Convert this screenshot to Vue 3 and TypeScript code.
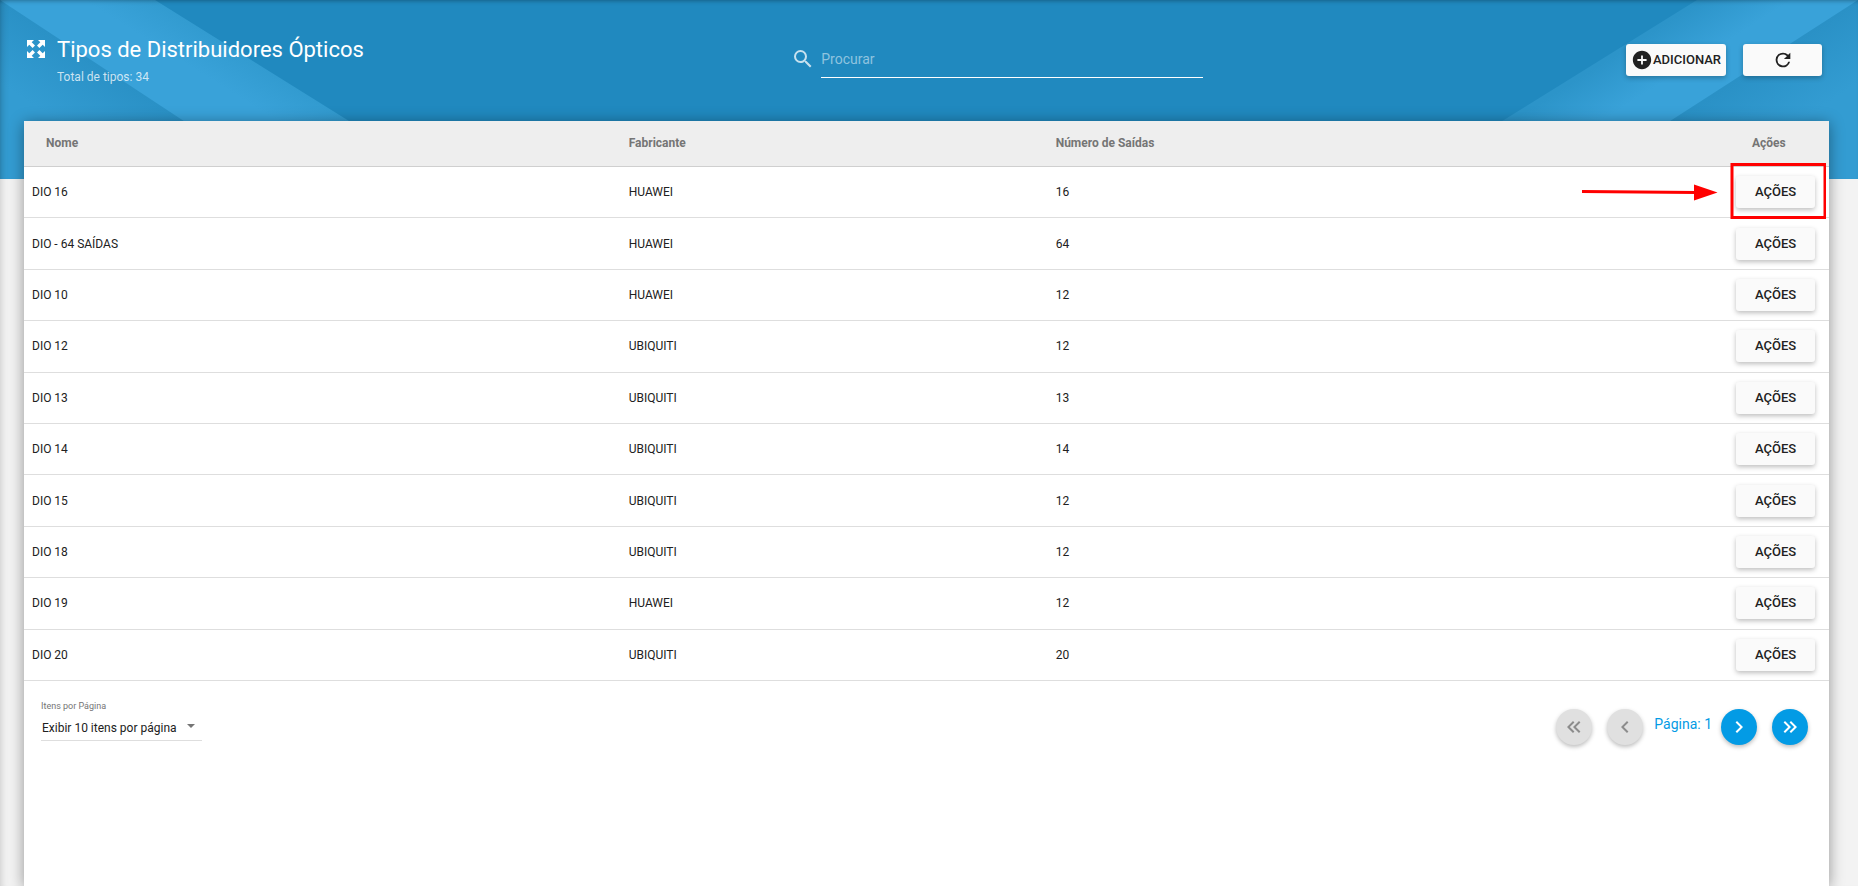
<script setup lang="ts">
import { ref } from 'vue'

interface DistributorType {
  name: string
  vendor: string
  outputs: number
}

const rows: DistributorType[] = [
  { name: 'DIO 16', vendor: 'HUAWEI', outputs: 16 },
  { name: 'DIO - 64 SAÍDAS', vendor: 'HUAWEI', outputs: 64 },
  { name: 'DIO 10', vendor: 'HUAWEI', outputs: 12 },
  { name: 'DIO 12', vendor: 'UBIQUITI', outputs: 12 },
  { name: 'DIO 13', vendor: 'UBIQUITI', outputs: 13 },
  { name: 'DIO 14', vendor: 'UBIQUITI', outputs: 14 },
  { name: 'DIO 15', vendor: 'UBIQUITI', outputs: 12 },
  { name: 'DIO 18', vendor: 'UBIQUITI', outputs: 12 },
  { name: 'DIO 19', vendor: 'HUAWEI', outputs: 12 },
  { name: 'DIO 20', vendor: 'UBIQUITI', outputs: 20 },
]

const search = ref('')
const pageSize = ref('10')
const page = ref(1)
</script>

<template>
  <div class="page">
    <div class="banner" aria-hidden="true">
      <svg class="facet facet-left" width="480" height="179" viewBox="0 0 480 179">
        <defs>
          <linearGradient id="outerL" gradientUnits="userSpaceOnUse" x1="100" y1="66" x2="62" y2="124">
            <stop offset="0" stop-color="#2a91c6" />
            <stop offset="1" stop-color="#339cd2" />
          </linearGradient>
          <linearGradient id="bandL" gradientUnits="userSpaceOnUse" x1="251" y1="60" x2="231" y2="92">
            <stop offset="0" stop-color="#329bd0" />
            <stop offset="1" stop-color="#39a2d9" />
          </linearGradient>
        </defs>
        <path d="M0 0H155L442 179H0Z" fill="url(#bandL)" />
        <path d="M0 0L272 179H0Z" fill="url(#outerL)" />
      </svg>
      <svg class="facet facet-right" width="480" height="179" viewBox="0 0 480 179">
        <defs>
          <linearGradient id="outerR" gradientUnits="userSpaceOnUse" x1="380" y1="66" x2="418" y2="124">
            <stop offset="0" stop-color="#2a91c6" />
            <stop offset="1" stop-color="#339cd2" />
          </linearGradient>
          <linearGradient id="bandR" gradientUnits="userSpaceOnUse" x1="229" y1="60" x2="255" y2="101">
            <stop offset="0" stop-color="#2c94c9" />
            <stop offset="1" stop-color="#39a2d9" />
          </linearGradient>
        </defs>
        <path d="M480 0H319L31 179H480Z" fill="url(#bandR)" />
        <path d="M480 0L202 179H480Z" fill="url(#outerR)" />
      </svg>
    </div>

    <header class="toolbar">
      <div class="heading">
        <svg class="expand" width="24" height="24" viewBox="0 0 24 24" fill="#fff">
          <path d="M3 3H10L7.700 5.300L11 8.600L8.600 11L5.300 7.700L3 10ZM21 3V10L18.700 7.700L15.400 11L13 8.600L16.300 5.300L14 3ZM3 21V14L5.300 16.300L8.600 13L11 15.400L7.700 18.700L10 21ZM21 21H14L16.300 18.700L13 15.400L15.400 13L18.700 16.300L21 14Z" />
        </svg>
        <div>
          <h1>Tipos de Distribuidores Ópticos</h1>
          <p>Total de tipos: 34</p>
        </div>
      </div>
      <div class="search">
        <svg width="24" height="24" viewBox="0 0 24 24" fill="#fff" fill-opacity=".75">
          <path d="M15.5 14h-.79l-.28-.27A6.47 6.47 0 0 0 16 9.5 6.5 6.5 0 1 0 9.5 16c1.61 0 3.09-.59 4.23-1.57l.27.28v.79l5 4.99L20.49 19l-4.99-5zm-6 0C7.01 14 5 11.99 5 9.5S7.01 5 9.5 5 14 7.01 14 9.5 11.99 14 9.5 14z" />
        </svg>
        <input v-model="search" type="text" placeholder="Procurar" aria-label="Procurar" />
      </div>
      <div class="tools">
        <button type="button" class="raised add">
          <svg width="22" height="22" viewBox="0 0 24 24" fill="#212121">
            <path d="M12 2C6.48 2 2 6.48 2 12s4.48 10 10 10 10-4.48 10-10S17.52 2 12 2zm5 11h-4v4h-2v-4H7v-2h4V7h2v4h4v2z" />
          </svg>
          <span>ADICIONAR</span>
        </button>
        <button type="button" class="raised" aria-label="Atualizar">
          <svg width="22" height="22" viewBox="0 0 24 24" fill="#212121">
            <path d="M17.65 6.35A7.96 7.96 0 0 0 12 4a8 8 0 1 0 7.73 10h-2.08A6 6 0 1 1 12 6c1.66 0 3.14.69 4.22 1.78L13 11h7V4l-2.35 2.35z" />
          </svg>
        </button>
      </div>
    </header>

    <main class="card">
      <table>
        <colgroup>
          <col class="c-name" />
          <col class="c-vendor" />
          <col />
          <col class="c-actions" />
        </colgroup>
        <thead>
          <tr>
            <th scope="col" class="first">Nome</th>
            <th scope="col">Fabricante</th>
            <th scope="col">Número de Saídas</th>
            <th scope="col" class="last">Ações</th>
          </tr>
        </thead>
        <tbody>
          <tr v-for="(row, i) in rows" :key="row.name">
            <td>{{ row.name }}</td>
            <td>{{ row.vendor }}</td>
            <td>{{ row.outputs }}</td>
            <td class="actions">
              <button type="button" class="raised">AÇÕES</button>
              <svg v-if="i === 0" class="callout" width="246" height="56" viewBox="0 0 246 56" aria-hidden="true">
                <path d="M2 28.500L116 29.500" stroke="#f00" stroke-width="3" />
                <path d="M114 21.500L137.500 29.500L114 37.500Z" fill="#f00" />
                <rect x="152" y="1.500" width="93" height="53" fill="none" stroke="#f00" stroke-width="3" />
              </svg>
            </td>
          </tr>
        </tbody>
      </table>

      <footer>
        <div class="sizer">
          <label for="page-size">Itens por Página</label>
          <div class="select">
            <select id="page-size" v-model="pageSize">
              <option value="10">Exibir 10 itens por página</option>
              <option value="25">Exibir 25 itens por página</option>
              <option value="50">Exibir 50 itens por página</option>
            </select>
            <span class="caret"></span>
          </div>
        </div>
        <nav class="pager" aria-label="Paginação">
          <button type="button" class="round" disabled aria-label="Primeira página">
            <svg width="24" height="24" viewBox="0 0 24 24"><path d="M18.410 7.410L17 6l-6 6 6 6 1.410-1.410L13.830 12zM12.410 7.410L11 6l-6 6 6 6 1.410-1.410L7.830 12z" /></svg>
          </button>
          <button type="button" class="round" disabled aria-label="Página anterior">
            <svg width="24" height="24" viewBox="0 0 24 24"><path d="M15.410 7.410L14 6l-6 6 6 6 1.410-1.410L10.830 12z" /></svg>
          </button>
          <span class="current">Página: {{ page }}</span>
          <button type="button" class="round active" aria-label="Próxima página" @click="page++">
            <svg width="24" height="24" viewBox="0 0 24 24"><path d="M10 6L8.590 7.410 13.170 12l-4.580 4.590L10 18l6-6z" /></svg>
          </button>
          <button type="button" class="round active" aria-label="Última página">
            <svg width="24" height="24" viewBox="0 0 24 24"><path d="M5.590 7.410L7 6l6 6-6 6-1.410-1.410L10.170 12zM11.590 7.410L13 6l6 6-6 6-1.410-1.410L16.170 12z" /></svg>
          </button>
        </nav>
      </footer>
    </main>
  </div>
</template>

<style>
body {
  margin: 0;
}
</style>

<style scoped>
.page {
  position: relative;
  display: flex;
  flex-direction: column;
  box-sizing: border-box;
  min-height: 100vh;
  overflow: hidden;
  background: #f3f3f3;
  box-shadow: inset 8px 0 8px -8px rgba(0, 0, 0, 0.22);
  font-family: Roboto, 'Liberation Sans', sans-serif;
  color: #212121;
}

.banner {
  position: absolute;
  inset: 0 0 auto;
  height: 179px;
  overflow: hidden;
  background: #2089bf;
}

.banner::after {
  content: '';
  position: absolute;
  inset: 0;
  box-shadow:
    inset 8px 0 8px -8px rgba(0, 0, 0, 0.3),
    inset 0 4px 4px -3px rgba(0, 0, 0, 0.3);
}

.facet {
  position: absolute;
  top: 0;
}

.facet-left {
  left: 0;
}

.facet-right {
  right: 0;
}

.toolbar {
  position: relative;
  display: grid;
  grid-template-columns: 31fr 412px 25fr;
  height: 121px;
  box-sizing: border-box;
  padding: 37px 36px 0 24px;
}

.heading {
  display: flex;
  gap: 9px;
}

h1 {
  margin: 0;
  font-size: 22px;
  font-weight: 400;
  line-height: 26px;
  color: #fff;
}

.heading p {
  margin: 6px 0 0;
  font-size: 12px;
  line-height: 16px;
  color: rgba(255, 255, 255, 0.75);
}

.search {
  display: flex;
  gap: 6px;
  padding-top: 10px;
}

.search input {
  flex: 1;
  min-width: 0;
  height: 31px;
  box-sizing: border-box;
  padding: 0 0 6px;
  border: 0;
  border-bottom: 1px solid #fff;
  outline: none;
  background: transparent;
  font: 400 14px/20px Roboto, 'Liberation Sans', sans-serif;
  color: #fff;
}

.search input::placeholder {
  color: rgba(255, 255, 255, 0.5);
  opacity: 1;
}

.tools {
  display: flex;
  justify-content: flex-end;
  align-items: flex-start;
  gap: 17px;
  padding-top: 7px;
}

.raised {
  display: inline-flex;
  align-items: center;
  justify-content: center;
  width: 79px;
  height: 32px;
  padding: 0;
  border: 0;
  border-radius: 3px;
  background: #fafafa;
  box-shadow: 0 2px 5px rgba(0, 0, 0, 0.26);
  font: 500 13px/20px Roboto, 'Liberation Sans', sans-serif;
  color: #212121;
}

.add {
  width: 100px;
}

.card {
  position: relative;
  flex: 1;
  margin: 0 29px 0 24px;
  background: #fff;
  box-shadow: 0 2px 14px rgba(0, 0, 0, 0.4);
}

table {
  width: 100%;
  height: 560px;
  table-layout: fixed;
  border-collapse: separate;
  border-spacing: 0;
  font-size: 12px;
  line-height: 16px;
}

.c-name {
  width: 33.5%;
}

.c-vendor {
  width: 427px;
}

.c-actions {
  width: 98px;
}

th {
  height: 43px;
  box-sizing: content-box;
  padding: 0 0 2px;
  border-bottom: 1px solid #cfcfcf;
  background: #eee;
  color: #757575;
  font-weight: 700;
  text-align: left;
}

th.first {
  padding-left: 22px;
}

th.last {
  padding-left: 21px;
}

td {
  padding: 0;
  border-bottom: 1px solid #dedede;
}

td:first-child {
  padding-left: 8px;
}

.actions {
  position: relative;
}

.actions .raised {
  margin: 0 0 0 5px;
  vertical-align: middle;
}

.callout {
  position: absolute;
  top: -4px;
  right: 3px;
}

footer {
  display: flex;
  justify-content: space-between;
  padding: 16px 21px 0 17px;
}

.sizer {
  width: 161px;
}

.sizer label {
  display: block;
  font-size: 9px;
  line-height: 18px;
  color: #757575;
}

.select {
  display: flex;
  align-items: center;
  height: 25px;
  border-bottom: 1px solid #dedede;
}

select {
  flex: 1;
  appearance: none;
  padding: 1px 0 0 1px;
  border: 0;
  background: transparent;
  font: 400 12px/20px Roboto, 'Liberation Sans', sans-serif;
  color: #212121;
}

.caret {
  margin: 0 7px 4px 0;
  border: 4px solid transparent;
  border-top-color: #757575;
  border-bottom: 0;
}

.pager {
  display: flex;
  align-items: flex-start;
  padding-top: 12px;
}

.round {
  display: flex;
  align-items: center;
  justify-content: center;
  width: 36px;
  height: 36px;
  padding: 0;
  border: 0;
  border-radius: 50%;
  background: #e0e0e0;
  box-shadow: 0 2px 4px rgba(0, 0, 0, 0.26);
  fill: #8c8c8c;
}

.round + .round {
  margin-left: 15px;
}

.active {
  background: #039be5;
  fill: #fff;
}

.current {
  padding: 0 9px 0 11px;
  font-size: 14px;
  line-height: 30px;
  color: #039be5;
}
</style>
